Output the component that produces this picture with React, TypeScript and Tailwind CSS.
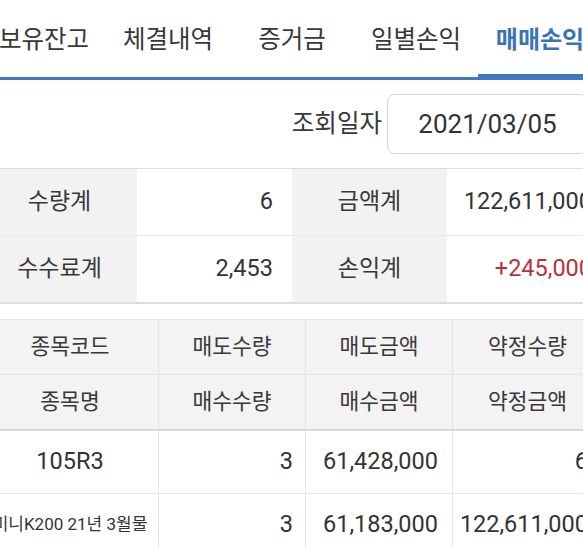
import React from 'react';

const tabs = ['보유잔고', '체결내역', '증거금', '일별손익', '매매손익'];

// summary rows: [label, value, label, value]
const summary = [
  { l1: '수량계', v1: '6', l2: '금액계', v2: '122,611,000', red: false },
  { l1: '수수료계', v1: '2,453', l2: '손익계', v2: '+245,000', red: true },
];

const headRows = [
  ['종목코드', '매도수량', '매도금액', '약정수량'],
  ['종목명', '매수수량', '매수금액', '약정금액'],
];

const font = { fontFamily: 'Roboto, "Noto Sans CJK KR", sans-serif' };

export default function App() {
  const activeTab = 4;

  return (
    <div className="w-full h-screen overflow-hidden bg-white text-[#333]" style={font}>
      <div className="w-[620px] -ml-[18px]">
        {/* tab bar */}
        <div className="flex">
          {tabs.map((t, i) => (
            <div
              key={t}
              className={
                i === activeTab
                  ? 'w-[124px] h-[80px] pt-[6px] flex items-center justify-center border-b-[6px] border-[#3d7ac0] text-[24px] font-bold text-[#3b74b5] whitespace-nowrap'
                  : 'w-[124px] h-[80px] pt-[3px] flex items-center justify-center border-b-[3px] border-[#3d7ac0] text-[24.5px] text-[#383838] whitespace-nowrap'
              }
            >
              {t}
            </div>
          ))}
        </div>

        {/* query date */}
        <div className="h-[89px] flex items-center justify-end pr-[14px] border-b border-[#dcdcdc]">
          <span className="text-[24.5px] text-[#383838] mr-[5px]">조회일자</span>
          <div className="w-[201px] h-[60px] border border-[#d6d6d6] rounded-[8px] flex items-center justify-center text-[26px] text-[#333]">
            2021/03/05
          </div>
        </div>

        {/* summary */}
        <div className="border-b-2 border-[#dddddd]">
          {summary.map((r, i) => (
            <div
              key={r.l1}
              className={
                i === 0
                  ? 'grid grid-cols-4 h-[67px] border-b border-[#e8e8e8] text-[23.5px]'
                  : 'grid grid-cols-4 h-[66px] text-[23.5px]'
              }
            >
              <div className="bg-[#f2f2f2] flex items-center justify-center text-[23px] text-[#383838]">{r.l1}</div>
              <div className="flex items-center justify-end pr-[19px]">{r.v1}</div>
              <div className="bg-[#f2f2f2] flex items-center justify-center text-[23px] text-[#383838]">{r.l2}</div>
              <div
                className={
                  r.red
                    ? 'flex items-center justify-end pr-[10px] text-[#b8323a] whitespace-nowrap'
                    : 'flex items-center justify-end pr-[10px] whitespace-nowrap'
                }
              >
                {r.v2}
              </div>
            </div>
          ))}
        </div>

        {/* trade table */}
        <div className="mt-[15px] border-t border-[#e4e4e4]">
          {headRows.map((row, i) => (
            <div
              key={row[0]}
              className={
                i === 0
                  ? 'grid grid-cols-[177px_147px_147px_149px] h-[55px] bg-[#f3f3f3] border-b border-[#e2e2e2] text-[21.5px] text-[#383838]'
                  : 'grid grid-cols-[177px_147px_147px_149px] h-[56px] bg-[#f3f3f3] border-b-2 border-[#d8d8d8] text-[21.5px] text-[#383838]'
              }
            >
              {row.map((c, j) => (
                <div
                  key={c}
                  className={
                    j < 3
                      ? 'flex items-center justify-center border-r border-[#e2e2e2]'
                      : 'flex items-center justify-center'
                  }
                >
                  {c}
                </div>
              ))}
            </div>
          ))}

          <div className="grid grid-cols-[177px_147px_147px_149px] h-[63px] border-b border-[#e6e6e6] text-[23.5px]">
            <div className="flex items-center justify-center border-r border-[#e6e6e6]">105R3</div>
            <div className="flex items-center justify-end pr-[12px] border-r border-[#e6e6e6]">3</div>
            <div className="flex items-center justify-end pr-[14px] border-r border-[#e6e6e6]">61,428,000</div>
            <div className="flex items-center justify-end pr-[14px]">6</div>
          </div>
          <div className="grid grid-cols-[177px_147px_147px_149px] h-[63px] border-b border-[#e6e6e6] text-[23.5px]">
            <div className="flex items-center justify-center border-r border-[#e6e6e6] text-[17px] whitespace-nowrap overflow-visible">
              미니K200 21년 3월물
            </div>
            <div className="flex items-center justify-end pr-[12px] border-r border-[#e6e6e6]">3</div>
            <div className="flex items-center justify-end pr-[14px] border-r border-[#e6e6e6]">61,183,000</div>
            <div className="flex items-center justify-end pr-[14px]">122,611,000</div>
          </div>
        </div>
      </div>
    </div>
  );
}
